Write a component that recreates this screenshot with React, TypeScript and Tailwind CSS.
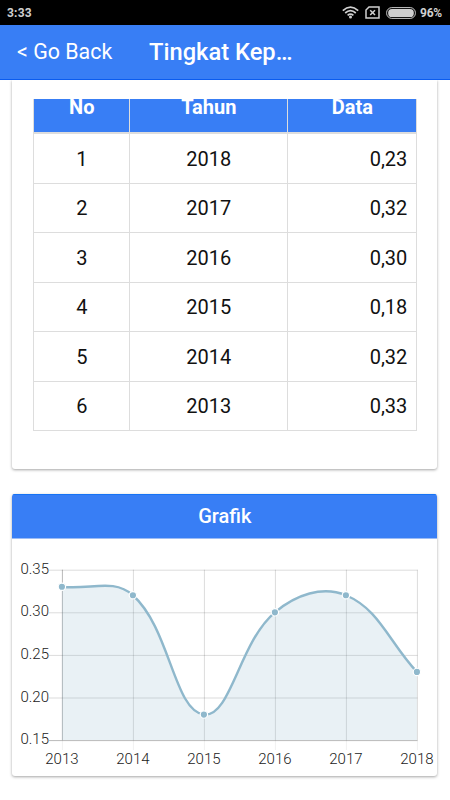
import * as React from "react"

const rows = [
  { year: "2018", value: "0,23" },
  { year: "2017", value: "0,32" },
  { year: "2016", value: "0,30" },
  { year: "2015", value: "0,18" },
  { year: "2014", value: "0,32" },
  { year: "2013", value: "0,33" },
]

const series = [0.33, 0.32, 0.18, 0.3, 0.32, 0.23]
const years = ["2013", "2014", "2015", "2016", "2017", "2018"]
const ticks = ["0.35", "0.30", "0.25", "0.20", "0.15"]

const LEFT = 49.9
const STEP = 71
const TOP = 30.7
const BOTTOM = 201.1

// cubic path through the points, handles weighted by neighbour distance
function splinePath(points: number[][], tension: number) {
  const handles = points.map((p, i) => {
    const prev = points[i - 1] ?? p
    const next = points[i + 1] ?? p
    const d01 = Math.hypot(p[0] - prev[0], p[1] - prev[1])
    const d12 = Math.hypot(next[0] - p[0], next[1] - p[1])
    const a = (tension * d01) / (d01 + d12)
    const b = (tension * d12) / (d01 + d12)
    const dx = next[0] - prev[0]
    const dy = next[1] - prev[1]
    return {
      before: [p[0] - a * dx, p[1] - a * dy],
      after: [p[0] + b * dx, Math.min(p[1] + b * dy, BOTTOM)],
    }
  })
  return points
    .map((p, i) =>
      i === 0 ? `M${p}` : `C${handles[i - 1].after} ${handles[i].before} ${p}`
    )
    .join(" ")
}

function StatusBar() {
  return (
    <div className="flex h-[25px] items-center bg-black pl-[7px] pr-[8px] text-[12px] font-bold text-[#d0d0d0]">
      <span className="flex-1 tracking-[0.2px]">3:33</span>
      <svg className="mr-[6px]" width="17" height="13" viewBox="0 0 17 13" fill="none" stroke="#d0d0d0" strokeWidth="1.7">
        <path d="M.8 4.6Q8.5-2.2 16.2 4.6M3.2 7Q8.5 2.4 13.8 7M5.6 9.3Q8.5 6.8 11.4 9.3" />
        <circle cx="8.5" cy="11" r="1.5" fill="#d0d0d0" stroke="none" />
      </svg>
      <svg className="mr-[6px]" width="15" height="13" viewBox="0 0 15 13" fill="none" stroke="#d0d0d0" strokeWidth="1.5">
        <path d="M4 1H14V12H1V4Z" />
        <path d="M5.2 4.2L10 9M10 4.2L5.2 9" />
      </svg>
      <svg className="mr-[4px]" width="30" height="12" viewBox="0 0 30 12">
        <rect x=".6" y=".6" width="28.8" height="10.8" rx="5.2" fill="none" stroke="#c8c8c8" strokeWidth="1" />
        <rect x="2.2" y="2" width="25.6" height="8" rx="3.6" fill="#cfcfcf" />
      </svg>
      <span className="tracking-[-0.2px]">96%</span>
    </div>
  )
}

function Header() {
  return (
    <header className="flex h-[55px] items-center border-b border-[#0a5cf0] bg-[#387ef5] text-white">
      <button className="w-[149px] pl-[17px] text-left text-[21.4px] leading-none">&lt; Go Back</button>
      <h1 className="pt-0.5 text-[23.7px] font-medium leading-none">Tingkat Kep…</h1>
    </header>
  )
}

function DataTable() {
  return (
    <div className="ml-[21px] w-[384px] overflow-hidden text-[20px] leading-none text-[#111]">
      <div className="grid h-[35px] grid-cols-[96px_158px_130px] border-b-2 border-[#dddddd] bg-[#387ef5] text-center font-bold text-white">
        {["No", "Tahun", "Data"].map((name) => (
          <div key={name} className="border-l border-[#dddddd] last:border-r">
            <div className="-mt-0.5">{name}</div>
          </div>
        ))}
      </div>
      {rows.map((row, i) => (
        <div key={row.year} className="grid h-[49.5px] grid-cols-[96px_158px_130px] border-b border-[#dddddd]">
          <div className="flex items-center justify-center border-l border-[#dddddd] pt-px">{i + 1}</div>
          <div className="flex items-center justify-center border-l border-[#dddddd] pt-px">{row.year}</div>
          <div className="flex items-center justify-end border-x border-[#dddddd] pt-px pr-[9px]">{row.value}</div>
        </div>
      ))}
    </div>
  )
}

function Chart() {
  const points = series.map((v, i) => [
    LEFT + i * STEP,
    TOP + ((0.35 - v) / 0.2) * (BOTTOM - TOP),
  ])
  const line = splinePath(points, 0.4)
  const gap = (BOTTOM - TOP) / 4

  return (
    <svg className="block" width="425" height="237" viewBox="0 0 425 237">
      <g stroke="#000">
        {ticks.map((t, i) => (
          <line key={t} x1="37" x2="405.5" y1={TOP + 0.5 + i * gap} y2={TOP + 0.5 + i * gap} strokeOpacity={i === 4 ? 0.28 : 0.14} />
        ))}
        {years.map((y, i) => (
          <g key={y}>
            <line x1={LEFT + 0.5 + i * STEP} x2={LEFT + 0.5 + i * STEP} y1={TOP} y2={BOTTOM} strokeOpacity={i === 0 ? 0.28 : 0.14} />
            <line x1={LEFT + 0.5 + i * STEP} x2={LEFT + 0.5 + i * STEP} y1={BOTTOM} y2="211" strokeOpacity=".06" />
          </g>
        ))}
      </g>
      <path d={`${line} V${BOTTOM} H${LEFT}Z`} fill="#8fb8cc" fillOpacity=".2" />
      <path d={line} fill="none" stroke="#8fb8cc" strokeWidth="2.4" />
      {points.map(([x, y]) => (
        <circle key={x} cx={x} cy={y} r="3.7" fill="#8fb8cc" stroke="#fff" strokeWidth="1.2" />
      ))}
      <g fill="#222" fontSize="15" fontWeight="300">
        {ticks.map((t, i) => (
          <text key={t} x="37" y={TOP + 4 + i * gap} textAnchor="end">{t}</text>
        ))}
        {years.map((y, i) => (
          <text key={y} x={LEFT + i * STEP} y="225" textAnchor="middle">{y}</text>
        ))}
      </g>
    </svg>
  )
}

export default function App() {
  return (
    <div className="h-[800px] w-[450px] overflow-hidden bg-white font-['Roboto',sans-serif]">
      <StatusBar />
      <Header />
      <main className="overflow-hidden pb-6 pl-[12.3px] pr-[12.6px]">
        <section className="mb-[25px] h-[388.6px] rounded-b-[3px] bg-white pt-[19px] shadow-[0_1px_3px_rgba(0,0,0,0.36)]">
          <DataTable />
        </section>
        <section className="overflow-hidden rounded-[3px] bg-white shadow-[0_1px_3px_rgba(0,0,0,0.36)]">
          <h2 className="flex h-[45.4px] items-center justify-center border-b border-t border-b-[#9cbcf5] border-t-[#1673f5] bg-[#387ef5] text-[20px] font-medium leading-none text-white">
            Grafik
          </h2>
          <Chart />
        </section>
      </main>
    </div>
  )
}
